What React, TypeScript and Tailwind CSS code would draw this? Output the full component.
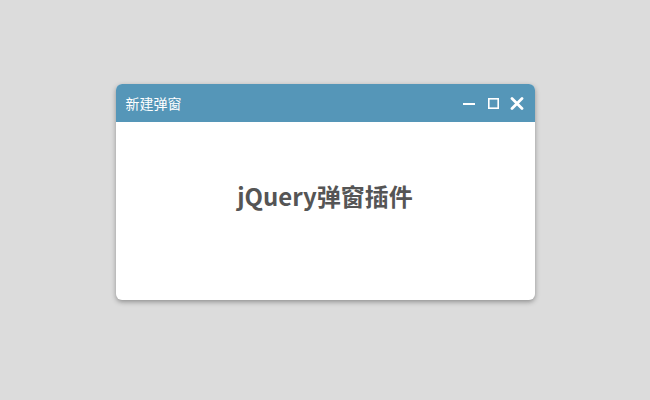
export default function App() {
  return (
    <div className="w-[650px] h-[400px] bg-[#dcdcdc] pt-[84px] flex justify-center" style={{ fontFamily: '"Noto Sans CJK SC", "Noto Sans", sans-serif' }}>
      <div className="w-[419px] h-[216px] bg-white rounded-[6px] shadow-[0_2px_5px_rgba(0,0,0,0.35)] flex flex-col overflow-hidden">
        <div className="h-[38px] bg-[#5596b8] flex items-center pl-[10px] pr-[11px] shrink-0">
          <span className="text-white text-[14px] leading-none">新建弹窗</span>
          <div className="ml-auto flex items-center">
            <svg width="12" height="12" viewBox="0 0 12 12" className="mr-[13px]">
              <rect x="0" y="6" width="12" height="2" fill="#fff" />
            </svg>
            <svg width="11" height="11" viewBox="0 0 11 11" className="mr-[11px]">
              <rect x="0.8" y="0.8" width="9.4" height="9.4" fill="none" stroke="#fff" strokeWidth="1.6" />
            </svg>
            <svg width="14" height="13" viewBox="0 0 14 13">
              <path d="M2 1.5 L12 11.5 M12 1.5 L2 11.5" stroke="#fff" strokeWidth="2.8" strokeLinecap="round" />
            </svg>
          </div>
        </div>
        <div className="flex-1 flex justify-center pt-[62px]">
          <span className="text-[24px] font-bold text-[#555555] leading-none">jQuery弹窗插件</span>
        </div>
      </div>
    </div>
  );
}
